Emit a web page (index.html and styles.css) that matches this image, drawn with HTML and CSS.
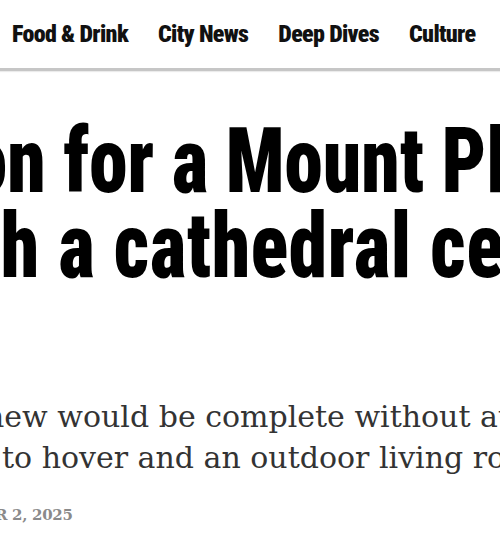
FILE: index.html
```html
<!DOCTYPE html>
<html lang="en">
<head>
<meta charset="utf-8">
<title>Renovation for a Mount Pleasant home</title>
<link rel="stylesheet" href="styles.css">
</head>
<body>
<nav class="topnav">
  <a class="topnav-item" href="#">Food &amp; Drink</a>
  <a class="topnav-item" href="#">City News</a>
  <a class="topnav-item" href="#">Deep Dives</a>
  <a class="topnav-item" href="#">Culture</a>
</nav>
<article class="story">
  <h1 class="headline">
    <span class="headline-line line-one">on for a Mount Pleasant</span>
    <span class="headline-line line-two">h a cathedral ceiling</span>
  </h1>
  <p class="dek">
    <span class="dek-line dek-one">new would be complete without au</span>
    <span class="dek-line dek-two">to hover and an outdoor living room</span>
  </p>
  <p class="dateline">R 2, 2025</p>
</article>
</body>
</html>
```
FILE: styles.css
```css
html, body {
  margin: 0;
  padding: 0;
  overflow: hidden;
  background: #ffffff;
  width: 500px;
  height: 550px;
}

.topnav {
  display: flex;
  gap: 30px;
  padding: 22px 0 22px 12px;
  border-bottom: 3px solid #c6c6c6;
  box-shadow: 0 1px 1px rgba(0, 0, 0, 0.08);
  white-space: nowrap;
}

.topnav-item {
  font-family: "Roboto Condensed", "Liberation Sans Narrow", sans-serif;
  font-weight: 900;
  font-size: 24px;
  line-height: 24px;
  letter-spacing: -0.65px;
  color: #111111;
  text-decoration: none;
}

.story {
  white-space: nowrap;
}

.headline {
  margin: 48px 0 0 0;
  font-family: "Roboto Condensed", "Liberation Sans Narrow", sans-serif;
  font-weight: 900;
  font-size: 90px;
  line-height: 85px;
  color: #000000;
  transform: scaleX(0.86);
  transform-origin: 0 0;
}

.headline-line {
  display: block;
}

.line-one {
  margin-left: -36px;
}

.line-two {
  margin-left: 1px;
  letter-spacing: 0.8px;
}

.dek {
  margin: 107px 0 0 0;
  font-family: "DejaVu Serif", "Liberation Serif", serif;
  font-weight: 400;
  font-size: 30px;
  line-height: 41px;
  color: #333333;
}

.dek-line {
  display: block;
}

.dek-one {
  margin-left: -15px;
}

.dek-two {
  margin-left: 2px;
}

.dateline {
  margin: 27px 0 0 -5px;
  font-family: "DejaVu Serif", "Liberation Serif", serif;
  font-weight: 700;
  font-size: 15px;
  line-height: 20px;
  letter-spacing: -0.3px;
  color: #8a8a8a;
}
```
